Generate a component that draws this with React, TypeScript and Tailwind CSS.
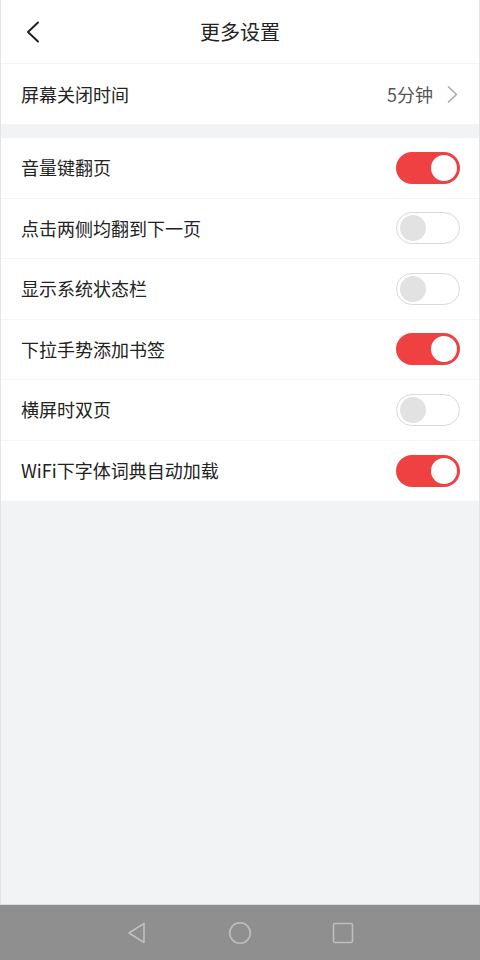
import { useState } from "react";

const font = { fontFamily: '"Noto Sans CJK SC", "Noto Sans", sans-serif' };

const initial = [
  { label: "音量键翻页", on: true },
  { label: "点击两侧均翻到下一页", on: false },
  { label: "显示系统状态栏", on: false },
  { label: "下拉手势添加书签", on: true },
  { label: "横屏时双页", on: false },
  { label: "WiFi下字体词典自动加载", on: true },
];

function Toggle({ on, onClick }: { on: boolean; onClick: () => void }) {
  return (
    <button
      onClick={onClick}
      className={
        on
          ? "w-[64px] h-[32px] rounded-full bg-[#ef4141] flex items-center justify-end pr-[3px]"
          : "w-[64px] h-[32px] rounded-full bg-white border border-[#dcdad6] flex items-center justify-start pl-[3px]"
      }
    >
      <span
        className={
          on
            ? "w-[26px] h-[26px] rounded-full bg-white"
            : "w-[26px] h-[26px] rounded-full bg-[#e2e2e2]"
        }
      />
    </button>
  );
}

export default function App() {
  const [items, setItems] = useState(initial);

  return (
    <div className="h-[960px] w-full flex flex-col bg-[#f2f3f5] border-x border-[#e4e4e4]" style={font}>
      <header className="h-[64px] shrink-0 bg-white border-b border-[#f3f3f3] flex items-center relative">
        <svg className="absolute left-[24px] top-[21px]" width="16" height="22" viewBox="0 0 16 22" fill="none">
          <path d="M13 1.5 L3 11 L13 20.5" stroke="#222" strokeWidth="2" strokeLinecap="round" strokeLinejoin="round" />
        </svg>
        <h1 className="w-full text-center text-[20px] text-[#222]">更多设置</h1>
      </header>

      <div className="h-[60px] shrink-0 bg-white flex items-center justify-between pl-[20px] pr-[21px]">
        <span className="text-[18px] text-[#222]">屏幕关闭时间</span>
        <div className="flex items-center gap-[14px]">
          <span className="text-[18px] text-[#555]">5分钟</span>
          <svg width="11" height="17" viewBox="0 0 11 17" fill="none">
            <path d="M1.5 1 L9.5 8.5 L1.5 16" stroke="#a8a8a8" strokeWidth="1.5" strokeLinecap="round" strokeLinejoin="round" />
          </svg>
        </div>
      </div>

      <div className="h-[14px] shrink-0" />

      <div className="flex flex-col bg-white">
        {items.map((item, i) => (
          <div
            key={item.label}
            className={
              i < items.length - 1
                ? "h-[60.5px] flex items-center justify-between pl-[20px] pr-[19px] border-b border-[#f4f4f4]"
                : "h-[60.5px] flex items-center justify-between pl-[20px] pr-[19px]"
            }
          >
            <span className="text-[18px] text-[#222]">{item.label}</span>
            <Toggle
              on={item.on}
              onClick={() =>
                setItems(items.map((it, j) => (j === i ? { ...it, on: !it.on } : it)))
              }
            />
          </div>
        ))}
      </div>

      <div className="flex-1" />

      <nav className="h-[56px] shrink-0 bg-[#8f8f8f] border-t border-[#dedede] flex items-center justify-center gap-[79px] -mx-px">
        <svg width="24" height="24" viewBox="0 0 24 24" fill="none">
          <path d="M19 2.5 L19 21.5 L4 12 Z" stroke="#bfbfbf" strokeWidth="1.6" strokeLinejoin="round" />
        </svg>
        <svg width="24" height="24" viewBox="0 0 24 24" fill="none">
          <circle cx="12" cy="12" r="10.3" stroke="#bfbfbf" strokeWidth="1.6" />
        </svg>
        <svg width="24" height="24" viewBox="0 0 24 24" fill="none">
          <rect x="2.5" y="2.5" width="19" height="19" rx="1.5" stroke="#bfbfbf" strokeWidth="1.6" />
        </svg>
      </nav>
    </div>
  );
}
